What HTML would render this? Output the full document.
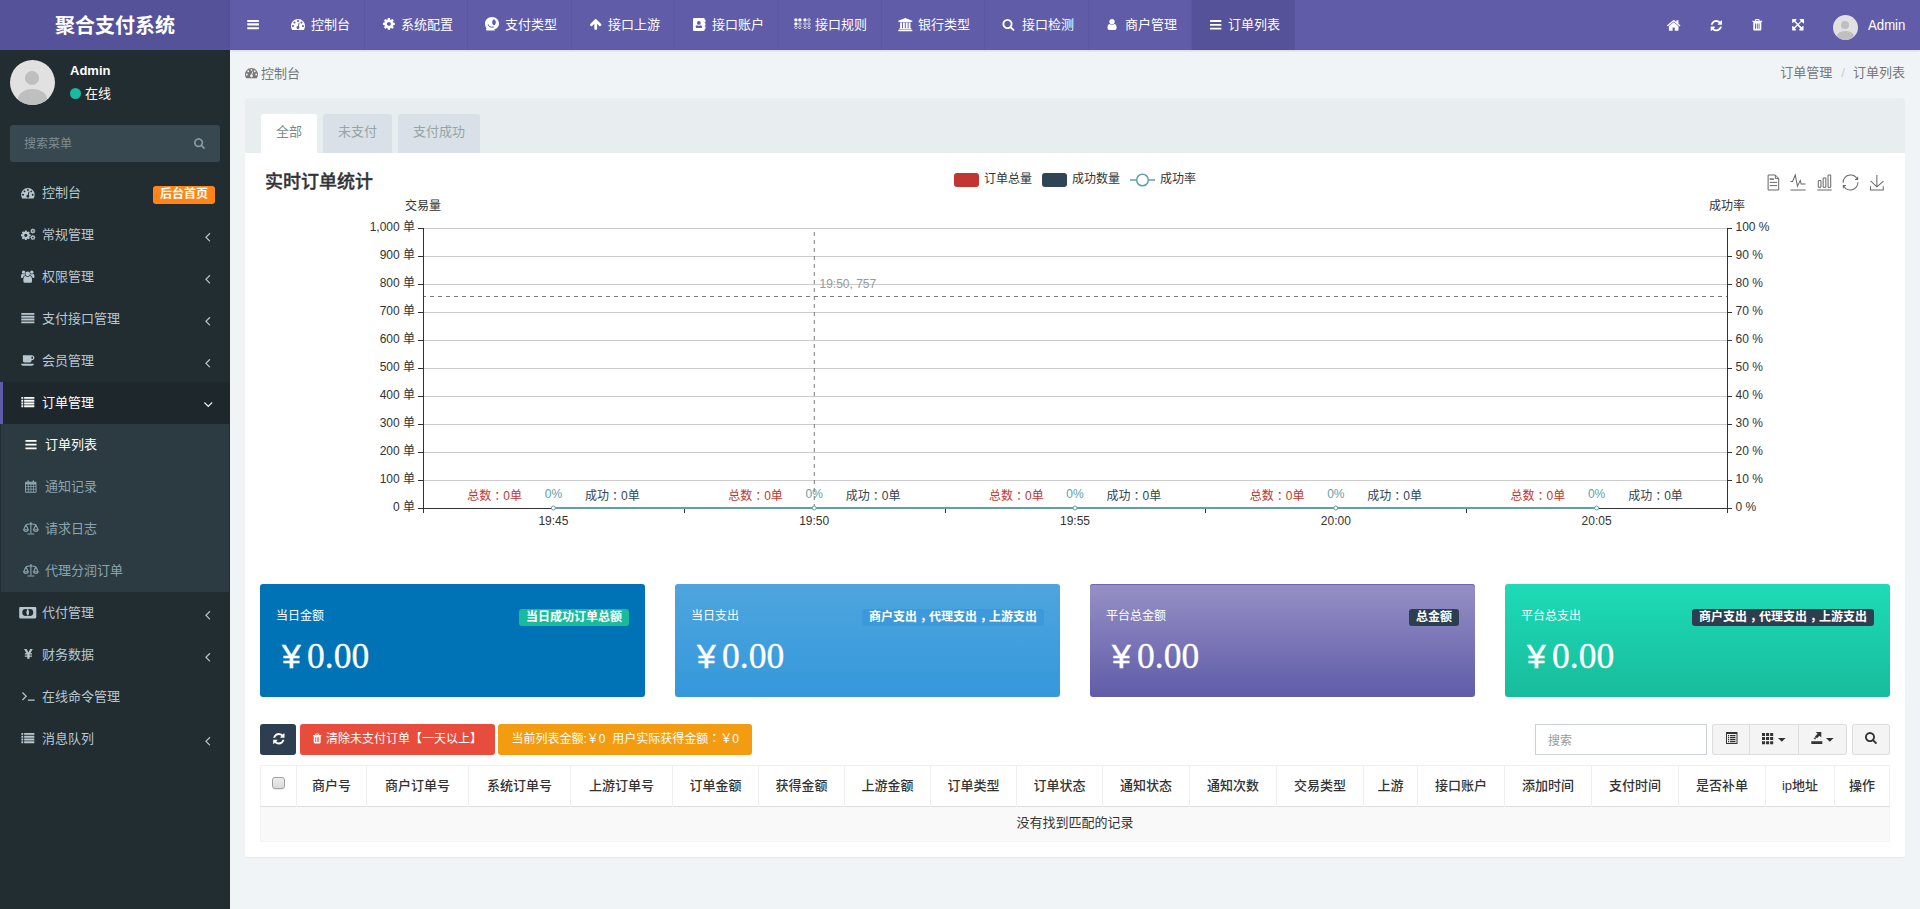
<!DOCTYPE html>
<html lang="zh-CN"><head><meta charset="utf-8"><title>聚合支付系统</title>
<style>
*{box-sizing:border-box}
html,body{margin:0;padding:0}
body{width:1920px;height:909px;overflow:hidden;position:relative;background:#f1f4f6;font-family:"Liberation Sans","Noto Sans CJK SC",sans-serif;font-size:13px;color:#333}
.ic{position:absolute;fill:currentColor;overflow:visible}
#header{position:absolute;left:0;top:0;width:1920px;height:50px;z-index:5}
#logo{position:absolute;left:0;top:0;width:230px;height:50px;background:#555299;color:#fff;font-size:20px;font-weight:700;text-align:center;line-height:53px}
#navbar{position:absolute;left:230px;top:0;width:1690px;height:50px;background:#605ca8;box-shadow:0 1px 2px rgba(0,0,0,.12)}
.ntab{position:absolute;top:0;height:50px;border-right:1px solid #5a569f}
.ntab.act{background:#555299;border-right-color:#555299}
.nl{position:absolute;right:14px;top:0;line-height:50px;color:#fff;font-size:13px;white-space:nowrap}
.avatar{position:absolute;border-radius:50%;background:#e1e1e1;overflow:hidden}
.avatar:before{content:"";position:absolute;left:33.800%;top:24%;width:31.500%;height:30.500%;border-radius:50%;background:#bfbfbf}
.avatar:after{content:"";position:absolute;left:17%;top:63.600%;width:66%;height:46%;border-radius:50%;background:#bfbfbf}
#topadmin{position:absolute;left:1638px;top:0;line-height:52px;color:#fff;font-size:13.200px;transform:scaleY(1.16);transform-origin:0 30.500px}
#sidebar{position:absolute;left:0;top:50px;width:230px;height:859px;background:#222d32}
#uname{position:absolute;left:70px;top:12px;color:#fff;font-weight:700;font-size:13px;line-height:18px}
#ustat{position:absolute;left:70px;top:33px;color:#fff;font-size:13px;line-height:22px;padding-left:15px}
#ustat i{position:absolute;left:0;top:4.5px;width:11px;height:11px;border-radius:50%;background:#18bc9c}
#msearch{position:absolute;left:10px;top:75px;width:210px;height:37px;background:#374850;border-radius:3px}
#msearch span{position:absolute;left:14px;top:0;line-height:39px;font-size:12px;color:#7f8d94}
.mi{position:absolute;left:0;width:230px;height:42px;color:#b8c7ce}
.mi .ml{position:absolute;left:42px;top:0;line-height:41px;font-size:13px;white-space:nowrap}
.mi.sub{color:#8aa4af}
.mi.sub .ml{left:45px}
.mi.on{color:#fff}
.mi.open{background:#1e282c;color:#fff;box-shadow:inset 3px 0 0 #605ca8}
#submenu{position:absolute;left:1px;top:374px;width:228px;height:168px;background:#2c3b41}
.hbadge{position:absolute;left:153px;top:14px;width:62px;height:18px;border-radius:3px;background:#ff851b;color:#fff;font-size:12px;font-weight:700;line-height:17px;text-align:center}
#content{position:absolute;left:230px;top:50px;width:1690px;height:859px}
#bcl{position:absolute;left:31px;top:13.5px;line-height:20px;color:#777;font-size:13px}
#bcr{position:absolute;right:15px;top:13px;line-height:20px;color:#777;font-size:13px}
#bcr i{font-style:normal;color:#ccc;padding:0 8px 0 9px}
#panel{position:absolute;left:15px;top:48px;width:1660px;height:759px;background:#fff;border-radius:3px;box-shadow:0 1px 1px rgba(0,0,0,.05)}
#phead{position:absolute;left:0;top:0;width:1660px;height:55px;background:#e8edf0;border-radius:3px 3px 0 0}
.tab{position:absolute;top:16px;height:39px;line-height:36px;text-align:center;font-size:13px;background:#d9e0e7;color:#95a5a6;border-radius:3px 3px 0 0}
.tab.on{background:#fff;color:#7b8a8b}
.card{position:absolute;top:486px;width:385px;height:113px;border-radius:3px;color:#fff}
.cl{position:absolute;left:16px;top:23px;font-size:12px;line-height:18px}
.cb{position:absolute;right:16px;top:25px;height:17px;border-radius:3px;font-size:12px;font-weight:700;line-height:16px;text-align:center;white-space:nowrap}
.cy{position:absolute;left:22px;top:48.500px;-webkit-text-stroke:.5px #fff;font-size:33.500px;line-height:48px;font-family:"Liberation Sans",sans-serif}
.cn{position:absolute;left:47px;top:48px;-webkit-text-stroke:.3px #fff;font-size:35.500px;line-height:48px;font-family:"Liberation Serif",serif}
.btn{position:absolute;height:31px;border-radius:3px;color:#fff;font-size:12px}
.btn span{position:absolute;top:0;line-height:30px;white-space:nowrap}
#sinput{position:absolute;width:172px;height:31px;border:1px solid #ccd0d9;background:#fff}
#sinput span{position:absolute;left:12px;top:0;line-height:32px;font-size:12px;color:#999}
.gbtn{position:absolute;height:31px;box-shadow:inset 0 0 0 1px #ddd;border-radius:3px;background:#f4f4f4}
.gbtn i{position:absolute;top:1px;width:1px;height:29px;background:#ddd}
#thead{position:absolute;width:1630px;height:42px;border-top:1px solid #f0f0f0;border-bottom:1px solid #ddd;border-left:1px solid #f0f0f0}
.th{position:absolute;top:0;height:41px;border-right:1px solid #f0f0f0;text-align:center;font-size:13px;font-weight:500;line-height:40px;color:#333;white-space:nowrap}
.cbx{position:absolute;left:11px;top:11px;width:12.500px;height:12px;border:1px solid #a0a0a0;border-radius:3px;background:linear-gradient(#ececec,#dcdcdc);box-shadow:0 1px 0 rgba(0,0,0,.08)}
#empty{position:absolute;width:1630px;height:35px;background:#f9f9f9;border:1px solid #f4f4f4;border-top:0;text-align:center;font-size:13px;line-height:32px;color:#333}
.jp{font-weight:inherit;font-family:"Liberation Sans","Noto Sans CJK JP",sans-serif}
.cb i{font-style:normal;position:relative;left:3px}

</style></head>
<body>
<div id="header"><div id="logo">聚合支付系统</div><div id="navbar">
<svg class="ic" style="left:16.8px;top:19.8px;width:12.2px;height:9.4px;color:#fff;" viewBox="0 0 12.2 9.4" preserveAspectRatio="xMidYMid meet"><path d="M.3 0h11.600v2.100H.3zM.3 3.300h11.600v2.100H.3zM.3 7.200h11.600v2.100H.3z"/></svg>
<div class="ntab" style="left:45px;width:90px">
<svg class="ic" style="left:16.3px;top:19.2px;width:14px;height:11px;color:#fff;" viewBox="0 256 1792 1408" preserveAspectRatio="xMidYMid meet"><path d="M384 1152q0-53-37.500-90.500T256 1024t-90.500 37.500T128 1152t37.500 90.500T256 1280t90.500-37.500T384 1152zm192-448q0-53-37.500-90.500T448 576t-90.500 37.500T320 704t37.500 90.500T448 832t90.500-37.500T576 704zm428 481l101-382q6-26-7.500-48.500T1059 725t-48 6.500-30 39.500l-101 382q-60 5-107 43.500t-63 98.500q-20 77 20 146t117 89 146-20 89-117q16-60-6-117t-72-91zm660-33q0-53-37.500-90.500T1536 1024t-90.500 37.500-37.500 90.500 37.500 90.500 90.500 37.500 90.500-37.500 37.500-90.500zM1024 512q0-53-37.500-90.500T896 384t-90.500 37.500T768 512t37.500 90.500T896 640t90.500-37.500T1024 512zm448 192q0-53-37.500-90.500T1344 576t-90.500 37.500T1216 704t37.500 90.500T1344 832t90.500-37.500T1472 704zm320 448q0 261-141 483-19 29-54 29H195q-35 0-54-29Q0 1414 0 1152q0-182 71-348t191-286 286-191 348-71 348 71 286 191 191 286 71 348z"/></svg>
<span class="nl">控制台</span></div>
<div class="ntab" style="left:135px;width:103px">
<svg class="ic" style="left:18px;top:18px;width:11.8px;height:11.8px;color:#fff;" viewBox="128 128 1536 1536" preserveAspectRatio="xMidYMid meet"><path d="M1152 896q0-106-75-181t-181-75-181 75-75 181 75 181 181 75 181-75 75-181zm512-109v222q0 12-8 23t-20 13l-185 28q-19 54-39 91 35 50 107 138 10 12 10 25t-9 23q-27 37-99 108t-94 71q-12 0-26-9l-138-108q-44 23-91 38-16 136-29 186-7 28-36 28H785q-14 0-24.500-8.500T749 1634l-28-184q-49-16-90-37l-141 107q-10 9-25 9-14 0-25-11-126-114-165-168-7-10-7-23 0-12 8-23 15-21 51-66.500t54-70.500q-27-50-41-99l-183-27q-13-2-21-12.500t-8-23.500V783q0-12 8-23t19-13l186-28q14-46 39-92-40-57-107-138-10-12-10-24 0-10 9-23 26-36 98.500-107.500T465 263q13 0 26 10l138 107q44-23 91-38 16-136 29-186 7-28 36-28h222q14 0 24.500 8.500T1043 158l28 184q49 16 90 37l142-107q9-9 24-9 13 0 25 10 129 119 165 170 7 8 7 22 0 12-8 23-15 21-51 66.500t-54 70.500q26 50 41 98l183 28q13 2 21 12.500t8 23.500z"/></svg>
<span class="nl">系统配置</span></div>
<div class="ntab" style="left:238px;width:104px">
<svg class="ic" style="left:17px;top:17.3px;width:14px;height:13.6px;color:#fff;" viewBox="0 0.3 14 13.4" preserveAspectRatio="xMidYMid meet"><path fill-rule="evenodd" d="M7 .3c3.900 0 7 2.900 7 6.400s-2.700 5.800-5.500 6.200c.9.100 1.400.2 1.400.5 0 .2-.2.300-.5.300H1.600c-.4 0-.6-.2-.6-.5v-.6c0-.4.300-.7.800-.9C.7 10.700 0 8.900 0 6.700 0 3.200 3.100.3 7 .3zM9 2.600c-1 0-1.800 1.300-1.800 2.900S8 8.400 9 8.400s1.800-1.300 1.800-2.900S10 2.600 9 2.600z"/><path d="M3.200 7.600c.3 2.200 2.600 3.400 5.600 2.600" fill="none" stroke="#605ca8" stroke-width="1"/></svg>
<span class="nl">支付类型</span></div>
<div class="ntab" style="left:342px;width:103px">
<svg class="ic" style="left:17.6px;top:18.9px;width:11.4px;height:10.9px;color:#fff;" viewBox="117 192 1558 1472" preserveAspectRatio="xMidYMid meet"><path d="M1675 971q0 51-37 90l-75 75q-38 38-91 38-54 0-90-38l-294-293v704q0 52-37.500 84.500T960 1664H832q-53 0-90.500-32.500T704 1547V843l-294 293q-36 38-90 38t-90-38l-75-75q-38-38-38-90 0-53 38-91l651-651q35-37 90-37 54 0 91 37l651 651q37 39 37 91z"/></svg>
<span class="nl">接口上游</span></div>
<div class="ntab" style="left:445px;width:104px">
<svg class="ic" style="left:17.5px;top:17.8px;width:12.5px;height:13px;color:#fff;" viewBox="0 0 12.5 12.9127" preserveAspectRatio="xMidYMid meet"><path fill-rule="evenodd" d="M1.200 0h9.300c.7 0 1.200.5 1.200 1.200v.6h.5c.2 0 .3.100.3.300v1.800c0 .2-.1.300-.3.300h-.5v.9h.5c.2 0 .3.100.3.300v1.800c0 .2-.1.300-.3.300h-.5v.9h.5c.2 0 .3.100.3.300v1.800c0 .2-.1.300-.3.300h-.5v.9c0 .7-.5 1.200-1.200 1.200H1.200C.5 13 0 12.500 0 11.800V1.200C0 .5.500 0 1.200 0zM5.850 3a1.900 1.900 0 1 0 0 3.800 1.900 1.900 0 0 0 0-3.800zM4.300 7.100c-1.100 0-1.700.9-1.700 2.100 0 .5.400.8.800.8h4.900c.4 0 .8-.3.800-.8 0-1.200-.6-2.100-1.700-2.100-.4.400-.9.600-1.550.6S4.700 7.500 4.300 7.100z"/></svg>
<span class="nl">接口账户</span></div>
<div class="ntab" style="left:549px;width:103px">
<svg class="ic" style="left:14.5px;top:18px;width:16.9px;height:11.3px;color:#fff;" viewBox="0 0 16.9 11.3" preserveAspectRatio="xMidYMid meet"><circle cx="1.9" cy="1.9" r="1.700"/><circle cx="1.9" cy="5.9" r="1.700"/><circle cx="1.9" cy="9.4" r="1.250" fill="none" stroke="currentColor" stroke-width=".8" opacity=".85"/><circle cx="5.9" cy="1.9" r="1.700"/><circle cx="5.9" cy="5.9" r="1.250" fill="none" stroke="currentColor" stroke-width=".8" opacity=".85"/><circle cx="5.9" cy="9.4" r="1.250" fill="none" stroke="currentColor" stroke-width=".8" opacity=".85"/><circle cx="11" cy="1.9" r="1.700"/><circle cx="11" cy="5.9" r="1.250" fill="none" stroke="currentColor" stroke-width=".8" opacity=".85"/><circle cx="11" cy="9.4" r="1.250" fill="none" stroke="currentColor" stroke-width=".8" opacity=".85"/><circle cx="15" cy="1.9" r="1.250" fill="none" stroke="currentColor" stroke-width=".8" opacity=".85"/><circle cx="15" cy="5.9" r="1.250" fill="none" stroke="currentColor" stroke-width=".8" opacity=".85"/><circle cx="15" cy="9.4" r="1.250" fill="none" stroke="currentColor" stroke-width=".8" opacity=".85"/></svg>
<span class="nl">接口规则</span></div>
<div class="ntab" style="left:652px;width:103px">
<svg class="ic" style="left:15.8px;top:17.6px;width:14.6px;height:13.2px;color:#fff;" viewBox="0 0 1920 1792" preserveAspectRatio="xMidYMid meet"><path d="M960 0l960 384v128h-128q0 26-20.500 45t-48.500 19H197q-28 0-48.500-19T128 512H0V384zM256 640h256v768h128V640h256v768h128V640h256v768h128V640h256v768h59q28 0 48.500 19t20.500 45v64H128v-64q0-26 20.500-45t48.500-19h59V640zm1595 960q28 0 48.500 19t20.500 45v128H0v-128q0-26 20.500-45t48.500-19h1782z"/></svg>
<span class="nl">银行类型</span></div>
<div class="ntab" style="left:755px;width:104px">
<svg class="ic" style="left:17px;top:18.9px;width:12.8px;height:11.9px;color:#fff;" viewBox="64 128 1664 1664" preserveAspectRatio="xMidYMid meet"><path d="M1216 832q0-185-131.500-316.500T768 384 451.500 515.500 320 832t131.500 316.500T768 1280t316.500-131.500T1216 832zm512 832q0 52-38 90t-90 38q-54 0-90-38l-343-342q-179 124-399 124-143 0-273.500-55.500t-225-150-150-225T64 832t55.500-273.500 150-225 225-150T768 128t273.500 55.500 225 150 150 225T1472 832q0 220-124 399l343 343q37 37 37 90z"/></svg>
<span class="nl">接口检测</span></div>
<div class="ntab" style="left:859px;width:103px">
<svg class="ic" style="left:18.2px;top:18.9px;width:10.1px;height:10.9px;color:#fff;" viewBox="256 128 1280 1536" preserveAspectRatio="xMidYMid meet"><path d="M1536 1399q0 109-62.500 187t-150.500 78H469q-88 0-150.500-78T256 1399q0-85 8.500-160.500t31.500-152 58.500-131 94-89T583 832q131 128 313 128t313-128q76 0 134.500 34.500t94 89 58.500 131 31.500 152 8.500 160.500zm-256-887q0 159-112.500 271.500T896 896 624.500 783.500 512 512t112.500-271.500T896 128t271.500 112.500T1280 512z"/></svg>
<span class="nl">商户管理</span></div>
<div class="ntab act" style="left:962px;width:103px">
<svg class="ic" style="left:17.6px;top:19.6px;width:11.4px;height:9.7px;color:#fff;" viewBox="128 256 1536 1280" preserveAspectRatio="xMidYMid meet"><path d="M1664 1344v128q0 26-19 45t-45 19H192q-26 0-45-19t-19-45v-128q0-26 19-45t45-19h1408q26 0 45 19t19 45zm0-512v128q0 26-19 45t-45 19H192q-26 0-45-19t-19-45V832q0-26 19-45t45-19h1408q26 0 45 19t19 45zm0-512v128q0 26-19 45t-45 19H192q-26 0-45-19t-19-45V320q0-26 19-45t45-19h1408q26 0 45 19t19 45z"/></svg>
<span class="nl">订单列表</span></div>
<svg class="ic" style="left:1437.4px;top:19.7px;width:13.4px;height:10.9px;color:#fff;" viewBox="89.8889 253 1612.22 1283" preserveAspectRatio="xMidYMid meet"><path d="M1472 992v480q0 26-19 45t-45 19h-384v-384H768v384H384q-26 0-45-19t-19-45V992q0-1 .5-3t.5-3l575-474 575 474q1 2 1 6zm223-69l-62 74q-8 9-21 11h-3q-13 0-21-7L896 424l-692 577q-12 8-24 7-13-2-21-11l-62-74q-8-10-7-23.500t11-21.500l719-599q32-26 76-26t76 26l244 204V288q0-14 9-23t23-9h192q14 0 23 9t9 23v408l219 182q10 8 11 21.500t-7 23.500z"/></svg>
<svg class="ic" style="left:1479.7px;top:19.5px;width:12.7px;height:11.3px;color:#fff;" viewBox="128 128 1536 1536" preserveAspectRatio="xMidYMid meet"><path d="M1639 1056q0 5-1 7-64 268-268 434.500T892 1664q-146 0-282.500-55T366 1452l-129 129q-19 19-45 19t-45-19-19-45v-448q0-26 19-45t45-19h448q26 0 45 19t19 45-19 45l-137 137q71 66 161 102t187 36q134 0 250-65t186-179q11-17 53-117 8-23 30-23h192q13 0 22.500 9.500t9.500 22.500zm25-800v448q0 26-19 45t-45 19h-448q-26 0-45-19t-19-45 19-45l138-138Q1097 384 896 384q-134 0-250 65T460 628q-11 17-53 117-8 23-30 23H178q-13 0-22.500-9.500T146 736v-7q65-268 270-434.500T896 128q146 0 284 55.500T1425 340l130-129q19-19 45-19t45 19 19 45z"/></svg>
<svg class="ic" style="left:1521.8px;top:19.2px;width:10.6px;height:11.6px;color:#fff;" viewBox="0 0 11 13" preserveAspectRatio="xMidYMid meet"><path fill-rule="evenodd" d="M4 0h3c.4 0 .7.300.8.600L8.200 2H10.600c.2 0 .4.200.4.400v.7c0 .2-.2.400-.4.400H10v8c0 .8-.6 1.500-1.300 1.500H2.300C1.600 13 1 12.300 1 11.500v-8H.4C.2 3.500 0 3.300 0 3.100v-.7C0 2.200.2 2 .4 2h2.400l.4-1.400C3.300.3 3.600 0 4 0zm.2 1L4 2h3l-.2-1zM3 5v6h1V5zm2 0v6h1V5zm2 0v6h1V5z"/></svg>
<svg class="ic" style="left:1561.8px;top:19.4px;width:12.2px;height:11.4px;color:#fff;" viewBox="64 64 1536 1472" preserveAspectRatio="xMidYMid meet"><path d="M1283 413l-355 355 355 355 144-144q29-31 70-14 39 17 39 59v448q0 26-19 45t-45 19h-448q-42 0-59-40-17-39 14-69l144-144-355-355-355 355 144 144q31 30 14 69-17 40-59 40H128q-26 0-45-19t-19-45v-448q0-42 40-59 39-17 69 14l144 144 355-355-355-355-144 144q-19 19-45 19-12 0-24-5-40-17-40-59V128q0-26 19-45t45-19h448q42 0 59 40 17 39-14 69L477 317l355 355 355-355-144-144q-31-30-14-69 17-40 59-40h448q26 0 45 19t19 45v448q0 42-39 59-13 5-25 5-26 0-45-19z"/></svg>
<div class="avatar" style="left:1603px;top:15px;width:25px;height:25px"></div>
<span id="topadmin">Admin</span>
</div></div>
<div id="sidebar">
<div class="avatar" style="left:10px;top:10px;width:45px;height:45px"></div>
<div id="uname">Admin</div><div id="ustat"><i></i>在线</div>
<div id="msearch"><span>搜索菜单</span><svg class="ic" style="left:184.4px;top:13px;width:10.9px;height:11px;color:#8b9aa1;" viewBox="64 128 1664 1664" preserveAspectRatio="xMidYMid meet"><path d="M1216 832q0-185-131.500-316.500T768 384 451.500 515.500 320 832t131.500 316.500T768 1280t316.500-131.500T1216 832zm512 832q0 52-38 90t-90 38q-54 0-90-38l-343-342q-179 124-399 124-143 0-273.500-55.500t-225-150-150-225T64 832t55.500-273.500 150-225 225-150T768 128t273.500 55.500 225 150 150 225T1472 832q0 220-124 399l343 343q37 37 37 90z"/></svg></div>
<div class="mi" style="top:122px"><svg class="ic" style="left:21px;top:15.6px;width:13.8px;height:10.6px;color:#b8c7ce;" viewBox="0 256 1792 1408" preserveAspectRatio="xMidYMid meet"><path d="M384 1152q0-53-37.500-90.500T256 1024t-90.500 37.500T128 1152t37.500 90.500T256 1280t90.500-37.500T384 1152zm192-448q0-53-37.500-90.500T448 576t-90.500 37.500T320 704t37.500 90.500T448 832t90.500-37.500T576 704zm428 481l101-382q6-26-7.500-48.500T1059 725t-48 6.500-30 39.500l-101 382q-60 5-107 43.500t-63 98.500q-20 77 20 146t117 89 146-20 89-117q16-60-6-117t-72-91zm660-33q0-53-37.500-90.500T1536 1024t-90.500 37.500-37.500 90.500 37.500 90.500 90.500 37.500 90.500-37.500 37.500-90.500zM1024 512q0-53-37.500-90.500T896 384t-90.500 37.500T768 512t37.500 90.500T896 640t90.500-37.500T1024 512zm448 192q0-53-37.500-90.500T1344 576t-90.500 37.500T1216 704t37.500 90.500T1344 832t90.500-37.500T1472 704zm320 448q0 261-141 483-19 29-54 29H195q-35 0-54-29Q0 1414 0 1152q0-182 71-348t191-286 286-191 348-71 348 71 286 191 191 286 71 348z"/></svg><span class="ml">控制台</span><span class="hbadge">后台首页</span></div>
<div class="mi" style="top:164px"><svg class="ic" style="left:21px;top:13.9px;width:14.3px;height:12.7px;color:#b8c7ce;" viewBox="0.200005 78.88 2055.24 1658.72" preserveAspectRatio="xMidYMid meet"><g transform="translate(-115,240) scale(.9)"><path d="M1152 896q0-106-75-181t-181-75-181 75-75 181 75 181 181 75 181-75 75-181zm512-109v222q0 12-8 23t-20 13l-185 28q-19 54-39 91 35 50 107 138 10 12 10 25t-9 23q-27 37-99 108t-94 71q-12 0-26-9l-138-108q-44 23-91 38-16 136-29 186-7 28-36 28H785q-14 0-24.500-8.500T749 1634l-28-184q-49-16-90-37l-141 107q-10 9-25 9-14 0-25-11-126-114-165-168-7-10-7-23 0-12 8-23 15-21 51-66.500t54-70.500q-27-50-41-99l-183-27q-13-2-21-12.500t-8-23.500V783q0-12 8-23t19-13l186-28q14-46 39-92-40-57-107-138-10-12-10-24 0-10 9-23 26-36 98.500-107.500T465 263q13 0 26 10l138 107q44-23 91-38 16-136 29-186 7-28 36-28h222q14 0 24.500 8.500T1043 158l28 184q49 16 90 37l142-107q9-9 24-9 13 0 25 10 129 119 165 170 7 8 7 22 0 12-8 23-15 21-51 66.500t-54 70.500q26 50 41 98l183 28q13 2 21 12.500t8 23.500z"/></g><g transform="translate(1290,20) scale(.46)"><path d="M1152 896q0-106-75-181t-181-75-181 75-75 181 75 181 181 75 181-75 75-181zm512-109v222q0 12-8 23t-20 13l-185 28q-19 54-39 91 35 50 107 138 10 12 10 25t-9 23q-27 37-99 108t-94 71q-12 0-26-9l-138-108q-44 23-91 38-16 136-29 186-7 28-36 28H785q-14 0-24.500-8.500T749 1634l-28-184q-49-16-90-37l-141 107q-10 9-25 9-14 0-25-11-126-114-165-168-7-10-7-23 0-12 8-23 15-21 51-66.500t54-70.500q-27-50-41-99l-183-27q-13-2-21-12.500t-8-23.500V783q0-12 8-23t19-13l186-28q14-46 39-92-40-57-107-138-10-12-10-24 0-10 9-23 26-36 98.500-107.500T465 263q13 0 26 10l138 107q44-23 91-38 16-136 29-186 7-28 36-28h222q14 0 24.500 8.500T1043 158l28 184q49 16 90 37l142-107q9-9 24-9 13 0 25 10 129 119 165 170 7 8 7 22 0 12-8 23-15 21-51 66.500t-54 70.500q26 50 41 98l183 28q13 2 21 12.500t8 23.500z"/></g><g transform="translate(1290,960) scale(.46)"><path d="M1152 896q0-106-75-181t-181-75-181 75-75 181 75 181 181 75 181-75 75-181zm512-109v222q0 12-8 23t-20 13l-185 28q-19 54-39 91 35 50 107 138 10 12 10 25t-9 23q-27 37-99 108t-94 71q-12 0-26-9l-138-108q-44 23-91 38-16 136-29 186-7 28-36 28H785q-14 0-24.500-8.500T749 1634l-28-184q-49-16-90-37l-141 107q-10 9-25 9-14 0-25-11-126-114-165-168-7-10-7-23 0-12 8-23 15-21 51-66.500t54-70.500q-27-50-41-99l-183-27q-13-2-21-12.500t-8-23.500V783q0-12 8-23t19-13l186-28q14-46 39-92-40-57-107-138-10-12-10-24 0-10 9-23 26-36 98.500-107.500T465 263q13 0 26 10l138 107q44-23 91-38 16-136 29-186 7-28 36-28h222q14 0 24.500 8.500T1043 158l28 184q49 16 90 37l142-107q9-9 24-9 13 0 25 10 129 119 165 170 7 8 7 22 0 12-8 23-15 21-51 66.500t-54 70.500q26 50 41 98l183 28q13 2 21 12.500t8 23.500z"/></g></svg><span class="ml">常规管理</span><svg class="ic" style="left:205.1px;top:18.6px;width:5.5px;height:8.6px;color:#b8c7ce;" viewBox="621 461 582 998" preserveAspectRatio="xMidYMid meet"><path d="M1203 544q0 13-10 23L800 960l393 393q10 10 10 23t-10 23l-50 50q-10 10-23 10t-23-10L631 983q-10-10-10-23t10-23l466-466q10-10 23-10t23 10l50 50q10 10 10 23z"/></svg></div>
<div class="mi" style="top:206px"><svg class="ic" style="left:21px;top:13.7px;width:13.4px;height:13.3px;color:#b8c7ce;" viewBox="0 0 14 13" preserveAspectRatio="xMidYMid meet"><path d="M7 1.200a2.400 2.400 0 1 1 0 4.800 2.400 2.400 0 0 1 0-4.800zM2.700 0a1.800 1.800 0 1 1 0 3.600 1.800 1.800 0 0 1 0-3.600zM11.300 0a1.800 1.800 0 1 1 0 3.600 1.800 1.800 0 0 1 0-3.600zM4.700 5.800c.6.600 1.400.9 2.300.9s1.700-.3 2.300-.9c1.600.1 2.200 1.700 2.200 3.700v1.700c0 1-.7 1.800-1.700 1.800H4.200c-1 0-1.700-.8-1.700-1.800V9.500c0-2 .6-3.600 2.200-3.700zM1.500 3.700c.4.300.8.400 1.200.4.500 0 .9-.1 1.300-.4.200.5.500 1 .9 1.400C3.200 5.400 2 6.600 1.800 8H1.200C.5 8 0 7.500 0 6.800V5.600c0-1 .5-1.800 1.500-1.900zM12.500 3.700c1 .1 1.500.9 1.500 1.900v1.200c0 .7-.5 1.200-1.200 1.200h-.6c-.2-1.400-1.400-2.600-3.100-2.900.4-.4.700-.9.900-1.400.4.300.8.400 1.300.4.400 0 .8-.1 1.200-.4z"/></svg><span class="ml">权限管理</span><svg class="ic" style="left:205.1px;top:18.6px;width:5.5px;height:8.6px;color:#b8c7ce;" viewBox="621 461 582 998" preserveAspectRatio="xMidYMid meet"><path d="M1203 544q0 13-10 23L800 960l393 393q10 10 10 23t-10 23l-50 50q-10 10-23 10t-23-10L631 983q-10-10-10-23t10-23l466-466q10-10 23-10t23 10l50 50q10 10 10 23z"/></svg></div>
<div class="mi" style="top:248px"><svg class="ic" style="left:21px;top:14.7px;width:13.7px;height:10.3px;color:#b8c7ce;" viewBox="0 0 14 11" preserveAspectRatio="xMidYMid meet"><path d="M0 0h14v2H0zM0 3h14v2H0zM0 6h14v2H0zM0 9h14v2H0z"/></svg><span class="ml">支付接口管理</span><svg class="ic" style="left:205.1px;top:18.6px;width:5.5px;height:8.6px;color:#b8c7ce;" viewBox="621 461 582 998" preserveAspectRatio="xMidYMid meet"><path d="M1203 544q0 13-10 23L800 960l393 393q10 10 10 23t-10 23l-50 50q-10 10-23 10t-23-10L631 983q-10-10-10-23t10-23l466-466q10-10 23-10t23 10l50 50q10 10 10 23z"/></svg></div>
<div class="mi" style="top:290px"><svg class="ic" style="left:21px;top:15.2px;width:13.4px;height:11px;color:#b8c7ce;" viewBox="0 0 14 11" preserveAspectRatio="xMidYMid meet"><path fill-rule="evenodd" d="M2 0h9.3c1.6 0 2.7 1.1 2.7 2.6s-1.100 2.600-2.700 2.600H11v.6c0 1-.8 1.700-1.700 1.700H3.700C2.800 7.500 2 6.800 2 5.800zM11 1.300v2.600h.3c.8 0 1.300-.6 1.300-1.300s-.5-1.300-1.300-1.300zM0 9h13.500c0 1.100-.9 2-2 2H2c-1.100 0-2-.9-2-2z"/></svg><span class="ml">会员管理</span><svg class="ic" style="left:205.1px;top:18.6px;width:5.5px;height:8.6px;color:#b8c7ce;" viewBox="621 461 582 998" preserveAspectRatio="xMidYMid meet"><path d="M1203 544q0 13-10 23L800 960l393 393q10 10 10 23t-10 23l-50 50q-10 10-23 10t-23-10L631 983q-10-10-10-23t10-23l466-466q10-10 23-10t23 10l50 50q10 10 10 23z"/></svg></div>
<div class="mi open" style="top:332px"><svg class="ic" style="left:21px;top:15px;width:13.7px;height:10.2px;color:#fff;" viewBox="0 0 14 11" preserveAspectRatio="xMidYMid meet"><path d="M0 0h2v2H0zM3 0h11v2H3zM0 3h2v2H0zM3 3h11v2H3zM0 6h2v2H0zM3 6h11v2H3zM0 9h2v2H0zM3 9h11v2H3z"/></svg><span class="ml">订单管理</span><svg class="ic" style="left:203.8px;top:19.7px;width:8.5px;height:5.3px;color:#fff;" viewBox="397 653 998 582" preserveAspectRatio="xMidYMid meet"><path d="M1395 736q0 13-10 23l-466 466q-10 10-23 10t-23-10L407 759q-10-10-10-23t10-23l50-50q10-10 23-10t23 10l393 393 393-393q10-10 23-10t23 10l50 50q10 10 10 23z"/></svg></div>
<div id="submenu"></div>
<div class="mi sub on" style="top:374px"><svg class="ic" style="left:25px;top:16px;width:12px;height:9.3px;color:#fff;" viewBox="128 256 1536 1280" preserveAspectRatio="xMidYMid meet"><path d="M1664 1344v128q0 26-19 45t-45 19H192q-26 0-45-19t-19-45v-128q0-26 19-45t45-19h1408q26 0 45 19t19 45zm0-512v128q0 26-19 45t-45 19H192q-26 0-45-19t-19-45V832q0-26 19-45t45-19h1408q26 0 45 19t19 45zm0-512v128q0 26-19 45t-45 19H192q-26 0-45-19t-19-45V320q0-26 19-45t45-19h1408q26 0 45 19t19 45z"/></svg><span class="ml">订单列表</span></div>
<div class="mi sub" style="top:416px"><svg class="ic" style="left:25.3px;top:14px;width:11.5px;height:13px;color:#8aa4af;" viewBox="0 0 12 13" preserveAspectRatio="xMidYMid meet"><path fill-rule="evenodd" d="M1 1.500h1.500V.8c0-.5.300-.8.800-.8s.8.300.8.800v.7h3.800V.8c0-.5.300-.8.800-.8s.8.300.8.800v.7H11c.6 0 1 .4 1 1V12c0 .6-.4 1-1 1H1c-.6 0-1-.4-1-1V2.500c0-.6.400-1 1-1zM1 4.500v1.700h2V4.500zm2.800 0v1.700h2V4.500zm2.800 0v1.700h2V4.500zm2.800 0v1.700H11V4.500zM1 7v1.800h2V7zm2.800 0v1.800h2V7zm2.800 0v1.800h2V7zm2.800 0v1.800H11V7zM1 9.600V12h2V9.600zm2.800 0V12h2V9.600zm2.800 0V12h2V9.600zm2.800 0V12H11V9.600z"/></svg><span class="ml">通知记录</span></div>
<div class="mi sub" style="top:458px"><svg class="ic" style="left:22.8px;top:14px;width:15.8px;height:12.8px;color:#8aa4af;" viewBox="0 0 16 12.6" preserveAspectRatio="xMidYMid meet"><g fill="none" stroke="currentColor" stroke-width="1.100"><path d="M8 1.200v10M3 2.500c1.500 0 2.500-.9 5-.9s3.500.9 5 .9M4.500 12h7M3 2.700L.8 7.500M3 2.700l2.200 4.800M13 2.700l-2.200 4.800M13 2.700l2.200 4.800"/><path d="M.5 7.600c.3 1.100 1.300 1.800 2.500 1.800s2.200-.7 2.500-1.800zM10.500 7.600c.3 1.100 1.300 1.800 2.500 1.800s2.200-.7 2.500-1.800z"/></g><circle cx="8" cy="1.200" r="1.100"/></svg><span class="ml">请求日志</span></div>
<div class="mi sub" style="top:500px"><svg class="ic" style="left:22.8px;top:14px;width:15.8px;height:12.8px;color:#8aa4af;" viewBox="0 0 16 12.6" preserveAspectRatio="xMidYMid meet"><g fill="none" stroke="currentColor" stroke-width="1.100"><path d="M8 1.200v10M3 2.500c1.500 0 2.500-.9 5-.9s3.500.9 5 .9M4.500 12h7M3 2.700L.8 7.500M3 2.700l2.200 4.800M13 2.700l-2.200 4.800M13 2.700l2.200 4.800"/><path d="M.5 7.600c.3 1.100 1.300 1.800 2.500 1.800s2.200-.7 2.500-1.800zM10.500 7.600c.3 1.100 1.300 1.800 2.500 1.800s2.200-.7 2.500-1.800z"/></g><circle cx="8" cy="1.200" r="1.100"/></svg><span class="ml">代理分润订单</span></div>
<div class="mi" style="top:542px"><svg class="ic" style="left:19.4px;top:14.6px;width:17.5px;height:11.4px;color:#b8c7ce;" viewBox="0 0 18 12" preserveAspectRatio="xMidYMid meet"><path fill-rule="evenodd" d="M1.200 0h15.600c.7 0 1.200.5 1.200 1.200v9.600c0 .7-.5 1.200-1.200 1.200H1.200C.5 12 0 11.500 0 10.800V1.200C0 .5.500 0 1.200 0zM6.800 2.200a3.600 3.600 0 1 0 0 7.200 3.600 3.600 0 0 0 0-7.200zm4.400 0a3.600 3.600 0 1 0 0 7.200 3.600 3.600 0 0 0 0-7.200z"/><path d="M9 3.300a3.600 3.600 0 0 1 0 5 3.600 3.600 0 0 1 0-5zM2 10h14v.8H2z" opacity=".55"/></svg><span class="ml">代付管理</span><svg class="ic" style="left:205.1px;top:18.6px;width:5.5px;height:8.6px;color:#b8c7ce;" viewBox="621 461 582 998" preserveAspectRatio="xMidYMid meet"><path d="M1203 544q0 13-10 23L800 960l393 393q10 10 10 23t-10 23l-50 50q-10 10-23 10t-23-10L631 983q-10-10-10-23t10-23l466-466q10-10 23-10t23 10l50 50q10 10 10 23z"/></svg></div>
<div class="mi" style="top:584px"><svg class="ic" style="left:23.7px;top:15px;width:8.8px;height:9.7px;color:#b8c7ce;" viewBox="0 0 9 10" preserveAspectRatio="xMidYMid meet"><path d="M0 0h2.600l1.900 3.700L6.400 0H9L6.500 4.500h1.700v1.300H5.700v.9h2.500V8H5.700v2H3.300V8H.8V6.700h2.500v-.9H.8V4.500h1.700z"/></svg><span class="ml">财务数据</span><svg class="ic" style="left:205.1px;top:18.6px;width:5.5px;height:8.6px;color:#b8c7ce;" viewBox="621 461 582 998" preserveAspectRatio="xMidYMid meet"><path d="M1203 544q0 13-10 23L800 960l393 393q10 10 10 23t-10 23l-50 50q-10 10-23 10t-23-10L631 983q-10-10-10-23t10-23l466-466q10-10 23-10t23 10l50 50q10 10 10 23z"/></svg></div>
<div class="mi" style="top:626px"><svg class="ic" style="left:21.5px;top:16.4px;width:12.7px;height:8.8px;color:#b8c7ce;" viewBox="0 0 13 9" preserveAspectRatio="xMidYMid meet"><path d="M.9 0l4.300 4.300L.9 8.600 0 7.700l3.400-3.400L0 .9zM6 7.800h7v1.200H6z"/></svg><span class="ml">在线命令管理</span></div>
<div class="mi" style="top:668px"><svg class="ic" style="left:21px;top:15px;width:13.7px;height:10.2px;color:#b8c7ce;" viewBox="0 0 14 11" preserveAspectRatio="xMidYMid meet"><path d="M0 0h2v2H0zM3 0h11v2H3zM0 3h2v2H0zM3 3h11v2H3zM0 6h2v2H0zM3 6h11v2H3zM0 9h2v2H0zM3 9h11v2H3z"/></svg><span class="ml">消息队列</span><svg class="ic" style="left:205.1px;top:18.6px;width:5.5px;height:8.6px;color:#b8c7ce;" viewBox="621 461 582 998" preserveAspectRatio="xMidYMid meet"><path d="M1203 544q0 13-10 23L800 960l393 393q10 10 10 23t-10 23l-50 50q-10 10-23 10t-23-10L631 983q-10-10-10-23t10-23l466-466q10-10 23-10t23 10l50 50q10 10 10 23z"/></svg></div>
</div>
<div id="content">
<svg class="ic" style="left:14.8px;top:18.4px;width:13px;height:10.2px;color:#777;" viewBox="0 256 1792 1408" preserveAspectRatio="xMidYMid meet"><path d="M384 1152q0-53-37.500-90.500T256 1024t-90.500 37.500T128 1152t37.500 90.500T256 1280t90.500-37.500T384 1152zm192-448q0-53-37.500-90.500T448 576t-90.500 37.500T320 704t37.500 90.500T448 832t90.500-37.500T576 704zm428 481l101-382q6-26-7.500-48.500T1059 725t-48 6.500-30 39.500l-101 382q-60 5-107 43.500t-63 98.500q-20 77 20 146t117 89 146-20 89-117q16-60-6-117t-72-91zm660-33q0-53-37.500-90.500T1536 1024t-90.500 37.500-37.500 90.500 37.500 90.500 90.500 37.500 90.500-37.500 37.500-90.500zM1024 512q0-53-37.500-90.500T896 384t-90.500 37.500T768 512t37.500 90.500T896 640t90.500-37.500T1024 512zm448 192q0-53-37.500-90.500T1344 576t-90.500 37.500T1216 704t37.500 90.500T1344 832t90.500-37.500T1472 704zm320 448q0 261-141 483-19 29-54 29H195q-35 0-54-29Q0 1414 0 1152q0-182 71-348t191-286 286-191 348-71 348 71 286 191 191 286 71 348z"/></svg>
<span id="bcl">控制台</span><span id="bcr">订单管理<i>/</i>订单列表</span>
<div id="panel"><div id="phead"><div class="tab on" style="left:16px;width:56px">全部</div><div class="tab" style="left:78px;width:69px">未支付</div><div class="tab" style="left:153px;width:82px">支付成功</div></div>
<svg id="chart" style="position:absolute;left:0;top:55px" width="1660" height="430" viewBox="245 153 1660 430" font-family="'Liberation Sans','Noto Sans CJK SC',sans-serif" font-size="12">
<text x="265" y="188" font-size="18" font-weight="500" fill="#333" stroke="#333" stroke-width=".35">实时订单统计</text>
<rect x="954" y="173" width="25" height="14" rx="3" fill="#c23531"/><text x="984" y="183" fill="#333">订单总量</text>
<rect x="1042" y="173" width="25" height="14" rx="3" fill="#2f4554"/><text x="1072" y="183" fill="#333">成功数量</text>
<path d="M1130 180h25" stroke="#61a0a8" stroke-width="1.5"/><circle cx="1142.500" cy="180" r="5.800" fill="#fff" stroke="#61a0a8" stroke-width="1.500"/><text x="1160" y="183" fill="#333">成功率</text>
<path transform="translate(1765.03,174.46) scale(0.2679)" d="M17.5,17.3H33 M17.5,17.3H33 M45.4,29.5h-28 M11.5,2v56H51V14.8L38.4,2H11.5z M38.4,2.2v12.7H51 M45.4,41.7h-28" fill="none" stroke="#666" stroke-width="3.73"/>
<path transform="translate(1789.30,173.03) scale(0.2918)" d="M4.1,28.9h7.1l9.3-22l7.4,38l9.7-19.7l3,12.8h14.9M4.1,58h51.4" fill="none" stroke="#666" stroke-width="3.43"/>
<path transform="translate(1816.48,174.46) scale(0.2679)" d="M6.7,22.9h10V48h-10V22.9zM24.9,13h10v35h-10V13zM43.2,2h10v46h-10V2zM3.1,58h53.7" fill="none" stroke="#666" stroke-width="3.73"/>
<path transform="translate(1842.49,174.49) scale(0.2669)" d="M47,18.9h9.8V8.7 M56.3,20.1 C52.1,9,40.5,0.6,26.8,2.1C12.6,3.7,1.6,16.2,2.1,30.6 M13,41.1H3.1v10.2 M3.7,39.9c4.2,11.1,15.8,19.5,29.5,18 c14.2-1.6,25.2-14.1,24.7-28.5" fill="none" stroke="#666" stroke-width="3.75"/>
<path transform="translate(1869.33,175.00) scale(0.2586)" d="M4.7,22.9L29.3,45.5L54.7,23.4M4.6,43.6L4.6,58L53.8,58L53.8,43.6M29.2,45.1L29.2,0" fill="none" stroke="#666" stroke-width="3.87"/>
<text x="423" y="210" text-anchor="middle" fill="#333">交易量</text>
<text x="1727" y="210" text-anchor="middle" fill="#333">成功率</text>
<path d="M423.5 228.5H1727.5" stroke="#ccc" stroke-width="1"/>
<path d="M423.5 256.5H1727.5" stroke="#ccc" stroke-width="1"/>
<path d="M423.5 284.5H1727.5" stroke="#ccc" stroke-width="1"/>
<path d="M423.5 312.5H1727.5" stroke="#ccc" stroke-width="1"/>
<path d="M423.5 340.5H1727.5" stroke="#ccc" stroke-width="1"/>
<path d="M423.5 368.5H1727.5" stroke="#ccc" stroke-width="1"/>
<path d="M423.5 396.5H1727.5" stroke="#ccc" stroke-width="1"/>
<path d="M423.5 424.5H1727.5" stroke="#ccc" stroke-width="1"/>
<path d="M423.5 452.5H1727.5" stroke="#ccc" stroke-width="1"/>
<path d="M423.5 480.5H1727.5" stroke="#ccc" stroke-width="1"/>
<path d="M423.5 228V509" stroke="#333"/>
<path d="M1727.5 228V509" stroke="#333"/>
<path d="M423 508.5H1728" stroke="#333"/>
<path d="M418 228.5H423.5M1727.5 228.5H1732" stroke="#333"/>
<text x="415" y="231" text-anchor="end" fill="#333">1,000 单</text>
<text x="1735.500" y="231" fill="#333">100 %</text>
<path d="M418 256.5H423.5M1727.5 256.5H1732" stroke="#333"/>
<text x="415" y="259" text-anchor="end" fill="#333">900 单</text>
<text x="1735.500" y="259" fill="#333">90 %</text>
<path d="M418 284.5H423.5M1727.5 284.5H1732" stroke="#333"/>
<text x="415" y="287" text-anchor="end" fill="#333">800 单</text>
<text x="1735.500" y="287" fill="#333">80 %</text>
<path d="M418 312.5H423.5M1727.5 312.5H1732" stroke="#333"/>
<text x="415" y="315" text-anchor="end" fill="#333">700 单</text>
<text x="1735.500" y="315" fill="#333">70 %</text>
<path d="M418 340.5H423.5M1727.5 340.5H1732" stroke="#333"/>
<text x="415" y="343" text-anchor="end" fill="#333">600 单</text>
<text x="1735.500" y="343" fill="#333">60 %</text>
<path d="M418 368.5H423.5M1727.5 368.5H1732" stroke="#333"/>
<text x="415" y="371" text-anchor="end" fill="#333">500 单</text>
<text x="1735.500" y="371" fill="#333">50 %</text>
<path d="M418 396.5H423.5M1727.5 396.5H1732" stroke="#333"/>
<text x="415" y="399" text-anchor="end" fill="#333">400 单</text>
<text x="1735.500" y="399" fill="#333">40 %</text>
<path d="M418 424.5H423.5M1727.5 424.5H1732" stroke="#333"/>
<text x="415" y="427" text-anchor="end" fill="#333">300 单</text>
<text x="1735.500" y="427" fill="#333">30 %</text>
<path d="M418 452.5H423.5M1727.5 452.5H1732" stroke="#333"/>
<text x="415" y="455" text-anchor="end" fill="#333">200 单</text>
<text x="1735.500" y="455" fill="#333">20 %</text>
<path d="M418 480.5H423.5M1727.5 480.5H1732" stroke="#333"/>
<text x="415" y="483" text-anchor="end" fill="#333">100 单</text>
<text x="1735.500" y="483" fill="#333">10 %</text>
<path d="M418 508.5H423.5M1727.5 508.5H1732" stroke="#333"/>
<text x="415" y="511" text-anchor="end" fill="#333">0 单</text>
<text x="1735.500" y="511" fill="#333">0 %</text>
<path d="M423.5 508.5V513" stroke="#333"/>
<path d="M684.5 508.5V513" stroke="#333"/>
<path d="M945.5 508.5V513" stroke="#333"/>
<path d="M1205.5 508.5V513" stroke="#333"/>
<path d="M1466.5 508.5V513" stroke="#333"/>
<path d="M1727.5 508.5V513" stroke="#333"/>
<text x="553.4" y="525" text-anchor="middle" fill="#333">19:45</text>
<text x="814.2" y="525" text-anchor="middle" fill="#333">19:50</text>
<text x="1075.0" y="525" text-anchor="middle" fill="#333">19:55</text>
<text x="1335.8" y="525" text-anchor="middle" fill="#333">20:00</text>
<text x="1596.6" y="525" text-anchor="middle" fill="#333">20:05</text>
<path d="M814.3 232V508" stroke="#7a7a7a" stroke-dasharray="4 4" fill="none"/>
<path d="M424 296.500H1727" stroke="#7a7a7a" stroke-dasharray="4 4" stroke-dashoffset="2" fill="none"/>
<text x="819.500" y="288" fill="#999">19:50, 757</text>
<path d="M553.4 508H1596.6" stroke="#61a0a8" stroke-width="2"/>
<circle cx="553.4" cy="508" r="2" fill="#fff" stroke="#61a0a8" stroke-width="1"/>
<text x="494.7" y="500" text-anchor="middle" fill="#c23531">总数<tspan lang="ja" dy="1.2" font-family="Noto Sans CJK JP,sans-serif">：</tspan><tspan dy="-1.2">0单</tspan></text>
<text x="553.4" y="498" text-anchor="middle" fill="#61a0a8">0%</text>
<text x="612.3" y="500" text-anchor="middle" fill="#2f4554">成功<tspan lang="ja" dy="1.2" font-family="Noto Sans CJK JP,sans-serif">：</tspan><tspan dy="-1.2">0单</tspan></text>
<circle cx="814.2" cy="508" r="2" fill="#fff" stroke="#61a0a8" stroke-width="1"/>
<text x="755.5" y="500" text-anchor="middle" fill="#c23531">总数<tspan lang="ja" dy="1.2" font-family="Noto Sans CJK JP,sans-serif">：</tspan><tspan dy="-1.2">0单</tspan></text>
<text x="814.2" y="498" text-anchor="middle" fill="#61a0a8">0%</text>
<text x="873.1" y="500" text-anchor="middle" fill="#2f4554">成功<tspan lang="ja" dy="1.2" font-family="Noto Sans CJK JP,sans-serif">：</tspan><tspan dy="-1.2">0单</tspan></text>
<circle cx="1075.0" cy="508" r="2" fill="#fff" stroke="#61a0a8" stroke-width="1"/>
<text x="1016.3" y="500" text-anchor="middle" fill="#c23531">总数<tspan lang="ja" dy="1.2" font-family="Noto Sans CJK JP,sans-serif">：</tspan><tspan dy="-1.2">0单</tspan></text>
<text x="1075.0" y="498" text-anchor="middle" fill="#61a0a8">0%</text>
<text x="1133.9" y="500" text-anchor="middle" fill="#2f4554">成功<tspan lang="ja" dy="1.2" font-family="Noto Sans CJK JP,sans-serif">：</tspan><tspan dy="-1.2">0单</tspan></text>
<circle cx="1335.8" cy="508" r="2" fill="#fff" stroke="#61a0a8" stroke-width="1"/>
<text x="1277.1" y="500" text-anchor="middle" fill="#c23531">总数<tspan lang="ja" dy="1.2" font-family="Noto Sans CJK JP,sans-serif">：</tspan><tspan dy="-1.2">0单</tspan></text>
<text x="1335.8" y="498" text-anchor="middle" fill="#61a0a8">0%</text>
<text x="1394.7" y="500" text-anchor="middle" fill="#2f4554">成功<tspan lang="ja" dy="1.2" font-family="Noto Sans CJK JP,sans-serif">：</tspan><tspan dy="-1.2">0单</tspan></text>
<circle cx="1596.6" cy="508" r="2" fill="#fff" stroke="#61a0a8" stroke-width="1"/>
<text x="1537.9" y="500" text-anchor="middle" fill="#c23531">总数<tspan lang="ja" dy="1.2" font-family="Noto Sans CJK JP,sans-serif">：</tspan><tspan dy="-1.2">0单</tspan></text>
<text x="1596.6" y="498" text-anchor="middle" fill="#61a0a8">0%</text>
<text x="1655.5" y="500" text-anchor="middle" fill="#2f4554">成功<tspan lang="ja" dy="1.2" font-family="Noto Sans CJK JP,sans-serif">：</tspan><tspan dy="-1.2">0单</tspan></text>
</svg>
<div class="card" style="left:15px;background:#0073b7"><span class="cl">当日金额</span><span class="cb" style="background:#18bc9c;width:110px">当日成功订单总额</span><span class="cy">¥</span><span class="cn">0.00</span></div>
<div class="card" style="left:430px;background:linear-gradient(#4fa5de,#3498db)"><span class="cl">当日支出</span><span class="cb" style="background:#3c9adc;width:182px">商户支出<i>，</i>代理支出<i>，</i>上游支出</span><span class="cy">¥</span><span class="cn">0.00</span></div>
<div class="card" style="left:845px;background:linear-gradient(#9690c5,#605ca8);box-shadow:inset 0 1px 0 #6d69b0"><span class="cl">平台总金额</span><span class="cb" style="background:#2c3e50;width:50px">总金额</span><span class="cy">¥</span><span class="cn">0.00</span></div>
<div class="card" style="left:1260px;background:linear-gradient(#1ddbb6,#18bc9c)"><span class="cl">平台总支出</span><span class="cb" style="background:#2c3e50;width:182px">商户支出<i>，</i>代理支出<i>，</i>上游支出</span><span class="cy">¥</span><span class="cn">0.00</span></div>
<div class="btn" style="left:15px;top:626px;width:36px;background:#2c3e50"><svg class="ic" style="left:12.6px;top:9.4px;width:11.7px;height:11.4px;color:#fff;" viewBox="128 128 1536 1536" preserveAspectRatio="xMidYMid meet"><path d="M1639 1056q0 5-1 7-64 268-268 434.500T892 1664q-146 0-282.500-55T366 1452l-129 129q-19 19-45 19t-45-19-19-45v-448q0-26 19-45t45-19h448q26 0 45 19t19 45-19 45l-137 137q71 66 161 102t187 36q134 0 250-65t186-179q11-17 53-117 8-23 30-23h192q13 0 22.500 9.500t9.500 22.500zm25-800v448q0 26-19 45t-45 19h-448q-26 0-45-19t-19-45 19-45l138-138Q1097 384 896 384q-134 0-250 65T460 628q-11 17-53 117-8 23-30 23H178q-13 0-22.500-9.500T146 736v-7q65-268 270-434.500T896 128q146 0 284 55.500T1425 340l130-129q19-19 45-19t45 19 19 45z"/></svg></div>
<div class="btn" style="left:55px;top:626px;width:195px;background:#e74c3c"><svg class="ic" style="left:13.2px;top:9.3px;width:8.4px;height:10.9px;color:#fff;" viewBox="0 0 11 13" preserveAspectRatio="xMidYMid meet"><path fill-rule="evenodd" d="M4 0h3c.4 0 .7.300.8.600L8.200 2H10.600c.2 0 .4.200.4.400v.7c0 .2-.2.400-.4.400H10v8c0 .8-.6 1.500-1.300 1.500H2.300C1.600 13 1 12.300 1 11.500v-8H.4C.2 3.500 0 3.300 0 3.100v-.7C0 2.200.2 2 .4 2h2.400l.4-1.400C3.300.3 3.600 0 4 0zm.2 1L4 2h3l-.2-1zM3 5v6h1V5zm2 0v6h1V5zm2 0v6h1V5z"/></svg><span style="left:26px">清除未支付订单【一天以上】</span></div>
<div class="btn" style="left:253px;top:626px;width:254px;background:#f39c12"><span style="left:13.500px">当前列表金额:￥0&nbsp; 用户实际获得金额<b class="jp" lang="ja">：</b>￥0</span></div>
<div id="sinput" style="left:1290px;top:626px"><span>搜索</span></div>
<div class="gbtn" style="left:1467px;top:626px;width:135px"><i style="left:37px"></i><i style="left:86px"></i><svg class="ic" style="left:14px;top:7.9px;width:11.5px;height:12px;color:#333;" viewBox="0 0 11.5 12" preserveAspectRatio="xMidYMid meet"><path fill-rule="evenodd" d="M0 0h11.500v12H0zM1 2v9h9.500V2zM2 3h1.200v1.200H2zM4 3h5.500v1.200H4zM2 5h1.200v1.200H2zM4 5h5.500v1.200H4zM2 7h1.200v1.200H2zM4 7h5.500v1.200H4zM2 9h1.200v1.200H2zM4 9h5.500v1.200H4z"/></svg><svg class="ic" style="left:50px;top:8.6px;width:11.2px;height:11.2px;color:#333;" viewBox="0 0 11 11" preserveAspectRatio="xMidYMid meet"><path d="M0 0h3v3H0zM4 0h3v3H4zM8 0h3v3H8zM0 4h3v3H0zM4 4h3v3H4zM8 4h3v3H8zM0 8h3v3H0zM4 8h3v3H4zM8 8h3v3H8z"/></svg><svg class="ic" style="left:66.2px;top:14.2px;width:7.6px;height:3.8px;color:#333;" viewBox="0 0 8 4" preserveAspectRatio="xMidYMid meet"><path d="M0 0h8L4 4z"/></svg><svg class="ic" style="left:98.6px;top:7.6px;width:11.6px;height:12px;color:#333;" viewBox="0 0 11 12" preserveAspectRatio="xMidYMid meet"><path d="M0 9.300h11V12H0zM4.500 0H10v5.500L8.200 3.700 5.600 6.300l-.9-.9L4 7.800 2.200 6l2.400-.7-.9-.9 2.600-2.600z"/></svg><svg class="ic" style="left:114.2px;top:14.2px;width:7.6px;height:3.8px;color:#333;" viewBox="0 0 8 4" preserveAspectRatio="xMidYMid meet"><path d="M0 0h8L4 4z"/></svg></div>
<div class="gbtn" style="left:1607px;top:626px;width:38px"><svg class="ic" style="left:13.2px;top:8px;width:11.8px;height:12px;color:#333;" viewBox="64 128 1664 1664" preserveAspectRatio="xMidYMid meet"><path d="M1216 832q0-185-131.500-316.500T768 384 451.500 515.500 320 832t131.500 316.500T768 1280t316.500-131.500T1216 832zm512 832q0 52-38 90t-90 38q-54 0-90-38l-343-342q-179 124-399 124-143 0-273.500-55.500t-225-150-150-225T64 832t55.500-273.500 150-225 225-150T768 128t273.500 55.500 225 150 150 225T1472 832q0 220-124 399l343 343q37 37 37 90z"/></svg></div>
<div id="thead" style="left:15px;top:667px">
<div class="th" style="left:0;width:36px"><b class="cbx"></b></div>
<div class="th" style="left:36px;width:70px">商户号</div>
<div class="th" style="left:106px;width:102px">商户订单号</div>
<div class="th" style="left:208px;width:102px">系统订单号</div>
<div class="th" style="left:310px;width:102px">上游订单号</div>
<div class="th" style="left:412px;width:86px">订单金额</div>
<div class="th" style="left:498px;width:86px">获得金额</div>
<div class="th" style="left:584px;width:86px">上游金额</div>
<div class="th" style="left:670px;width:86px">订单类型</div>
<div class="th" style="left:756px;width:86px">订单状态</div>
<div class="th" style="left:842px;width:87px">通知状态</div>
<div class="th" style="left:929px;width:87px">通知次数</div>
<div class="th" style="left:1016px;width:87px">交易类型</div>
<div class="th" style="left:1103px;width:54px">上游</div>
<div class="th" style="left:1157px;width:87px">接口账户</div>
<div class="th" style="left:1244px;width:87px">添加时间</div>
<div class="th" style="left:1331px;width:87px">支付时间</div>
<div class="th" style="left:1418px;width:87px">是否补单</div>
<div class="th" style="left:1505px;width:69px">ip地址</div>
<div class="th" style="left:1574px;width:55px">操作</div>
</div>
<div id="empty" style="left:15px;top:709px">没有找到匹配的记录</div>
</div></div>
</body></html>
